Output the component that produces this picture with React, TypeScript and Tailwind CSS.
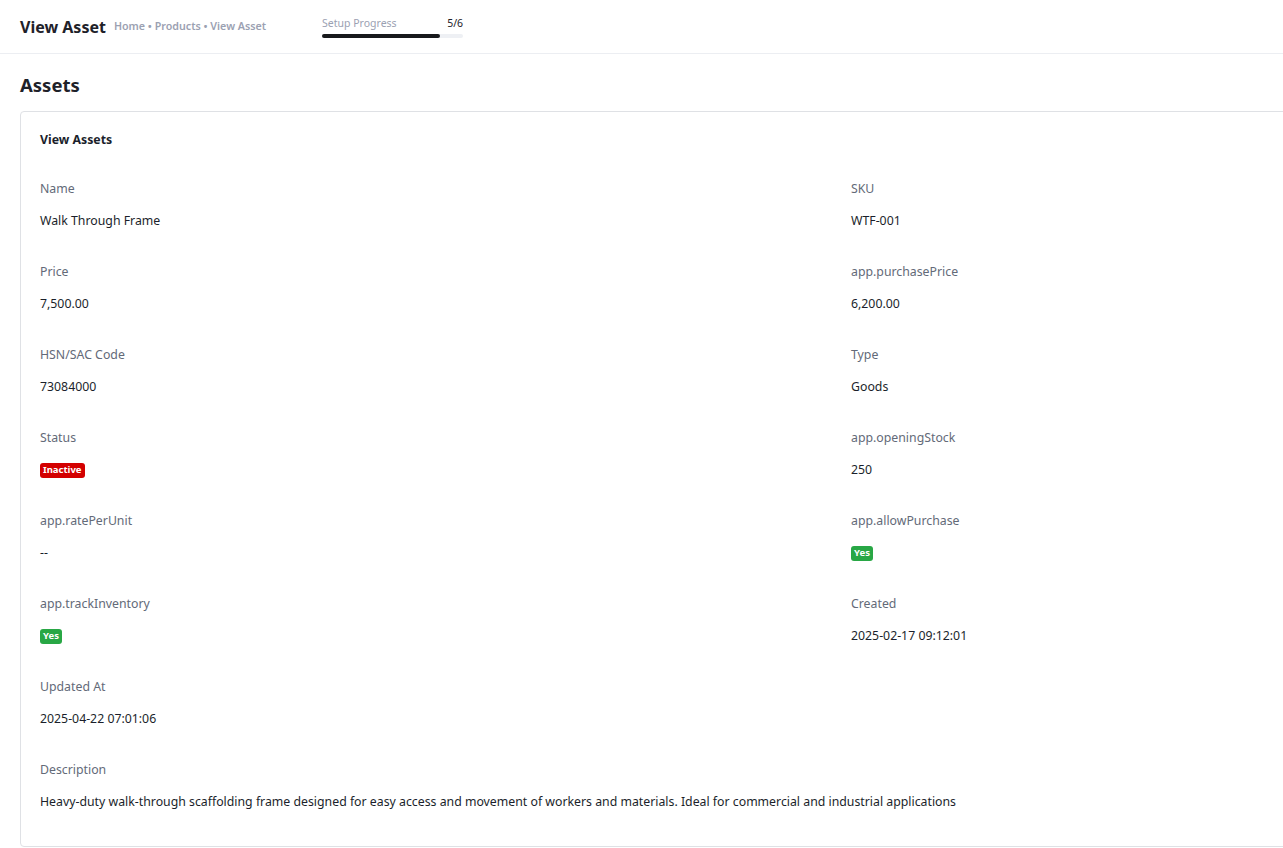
import React from "react";

type Field = { label: string; value: React.ReactNode };

const Badge = ({ text, color }: { text: string; color: "red" | "green" }) => (
  <span
    className={
      "inline-flex h-[15px] items-center rounded-[3px] px-[3px] text-[9.5px] font-bold leading-none text-white " +
      (color === "red" ? "bg-[#d30000]" : "bg-[#28a745]")
    }
  >
    {text}
  </span>
);

const fields: Field[] = [
  { label: "Name", value: "Walk Through Frame" },
  { label: "SKU", value: "WTF-001" },
  { label: "Price", value: "7,500.00" },
  { label: "app.purchasePrice", value: "6,200.00" },
  { label: "HSN/SAC Code", value: "73084000" },
  { label: "Type", value: "Goods" },
  { label: "Status", value: <Badge text="Inactive" color="red" /> },
  { label: "app.openingStock", value: "250" },
  { label: "app.ratePerUnit", value: "--" },
  { label: "app.allowPurchase", value: <Badge text="Yes" color="green" /> },
  { label: "app.trackInventory", value: <Badge text="Yes" color="green" /> },
  { label: "Created", value: "2025-02-17 09:12:01" },
  { label: "Updated At", value: "2025-04-22 07:01:06" },
];

const FieldView = ({ label, value, full }: Field & { full?: boolean }) => (
  <div className={"flex flex-col " + (full ? "col-span-2 pb-[34px]" : "pb-[31px]")}>
    <div className="text-[12.3px] leading-[20px] text-[#636a78]">{label}</div>
    <div className="mt-[12px] flex h-[20px] items-center text-[12.3px] leading-[20px] text-[#1b1f2b]">{value}</div>
  </div>
);

export default function App() {
  return (
    <div
      className="min-h-[848px] w-full overflow-hidden bg-white"
      style={{ fontFamily: '"Noto Sans", "Open Sans", Arial, sans-serif' }}
    >
      <header className="flex h-[54px] items-center border-b border-[#eceef2] px-[20px]">
        <div className="flex items-center gap-[8px]">
          <h1 className="text-[16px] font-bold leading-none text-[#1e2129]">View Asset</h1>
          <span className="text-[10.7px] font-semibold leading-none text-[#9ba1b2]">Home • Products • View Asset</span>
        </div>
        <div className="ml-[56px] flex w-[141px] flex-col">
          <div className="flex items-center justify-between text-[10.5px] leading-[14px]">
            <span className="text-[#9ba1b2]">Setup Progress</span>
            <span className="text-[#1e2129]">5/6</span>
          </div>
          <div className="mt-[4px] h-[4px] w-full rounded-full bg-[#eef0f4]">
            <div className="h-full w-[83.3%] rounded-full bg-[#18191c]" />
          </div>
        </div>
      </header>

      <main className="px-[20px]">
        <h2 className="pt-[19px] pb-[14px] text-[18.5px] font-bold leading-[24px] text-[#1e2129]">Assets</h2>
        <div className="w-[1662px] rounded-[4px] border border-[#dfe1e5] px-[19px] pt-[18px]">
          <div className="text-[12.3px] font-bold leading-[20px] text-[#1b1f2b]">View Assets</div>
          <div className="mt-[29px] grid grid-cols-2">
            {fields.map((f) => (
              <FieldView key={f.label} {...f} />
            ))}
            <div />
            <FieldView
              full
              label="Description"
              value="Heavy-duty walk-through scaffolding frame designed for easy access and movement of workers and materials. Ideal for commercial and industrial applications"
            />
          </div>
        </div>
      </main>
    </div>
  );
}
